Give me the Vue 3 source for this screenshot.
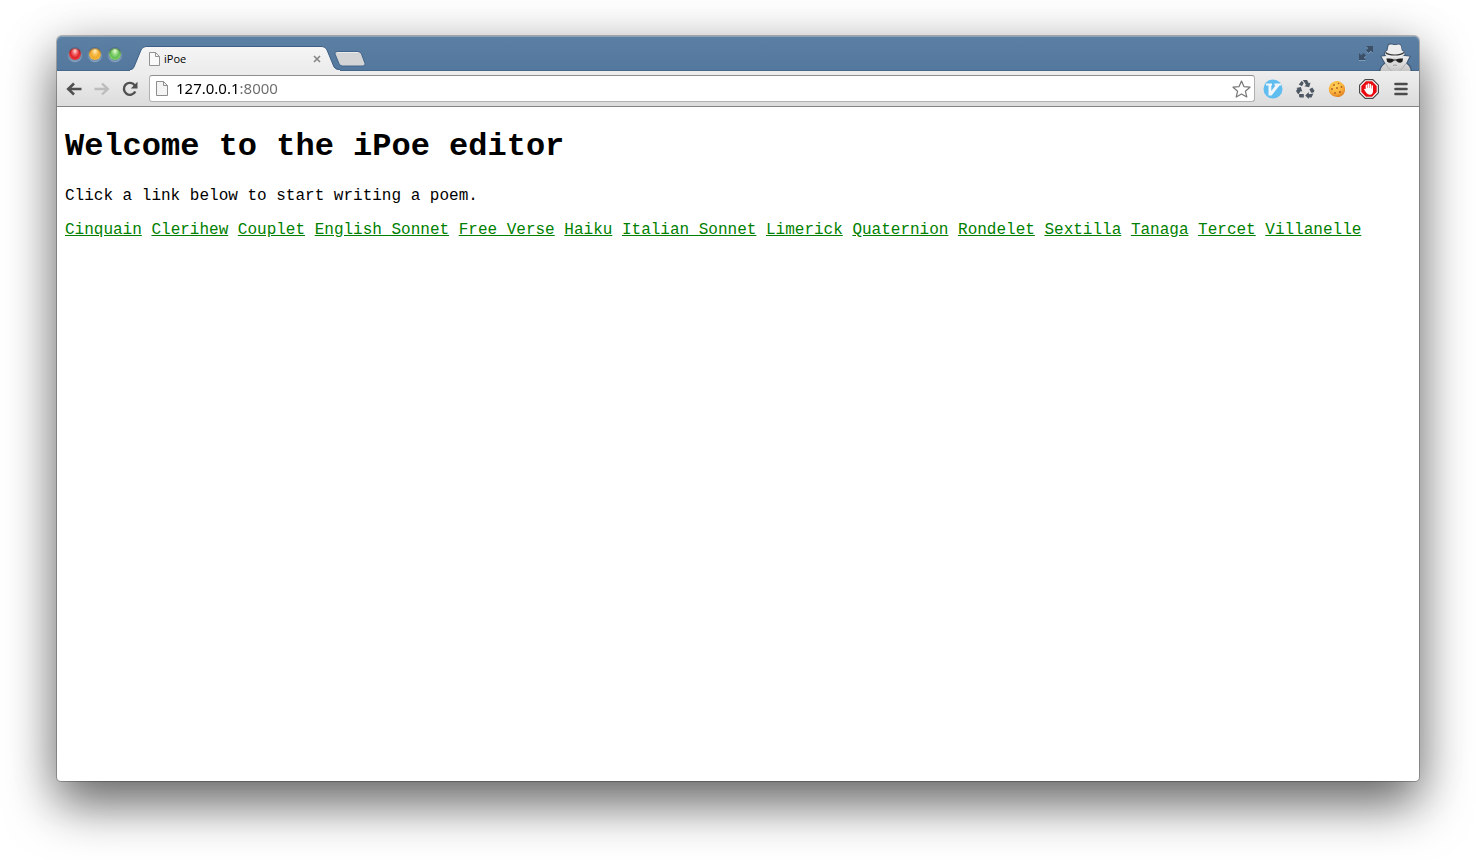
<script setup>
import { ref } from 'vue'

const address = ref('127.0.0.1:8000')
const poems = [
  'Cinquain', 'Clerihew', 'Couplet', 'English Sonnet', 'Free Verse', 'Haiku', 'Italian Sonnet',
  'Limerick', 'Quaternion', 'Rondelet', 'Sextilla', 'Tanaga', 'Tercet', 'Villanelle',
]
const lights = [
  { name: 'Close window', tone: 'red' },
  { name: 'Minimize window', tone: 'amber' },
  { name: 'Zoom window', tone: 'green' },
]
</script>

<template>
  <div class="desktop">
    <div class="window">
      <header class="strip">
        <div class="lights">
          <button v-for="l in lights" :key="l.tone" class="light" :class="l.tone" :aria-label="l.name"></button>
        </div>
        <div class="tab">
          <svg class="tab-shape" width="210" height="25" viewBox="0 0 210 25" aria-hidden="true">
            <defs>
              <linearGradient id="tabFill" x1="0" y1="0" x2="0" y2="1">
                <stop offset="0" stop-color="#f5f5f5" />
                <stop offset="1" stop-color="#ececec" />
              </linearGradient>
            </defs>
            <path d="M0 25V24Q3 24 4 21L11 4Q12.500 .5 16 .5H192Q195.500 .5 197 4L204 21Q205.500 24 210 24V25Z" fill="url(#tabFill)" />
            <path d="M0 23.500Q3 23.500 4 21L11 4Q12.500 .5 16 .5H192Q195.500 .5 197 4L204 21Q205.500 23.500 210 23.500" fill="none" stroke="#3d5f85" />
          </svg>
          <svg class="page-icon" width="11" height="14" viewBox="0 0 11 14" aria-hidden="true">
            <path d="M.5 .5H6.500L10.500 4.500V13.500H.5Z" fill="#fafafa" stroke="#929292" />
            <path d="M6.500 .5V4.500H10.500" fill="none" stroke="#929292" />
          </svg>
          <span class="tab-title">iPoe</span>
          <button class="tab-close" aria-label="Close tab">
            <svg width="8" height="8" viewBox="0 0 8 8"><path d="M1 1L7 7M7 1L1 7" stroke="#858585" stroke-width="1.600" /></svg>
          </button>
        </div>
        <button class="new-tab" aria-label="New tab">
          <svg width="32" height="16" viewBox="0 0 32 16">
            <path d="M3 .5H24Q26.500 .5 27.500 3L31 12.500Q31.500 15 29 15H8.500Q6 15 5 12.500L1 3Q.3 .5 3 .5Z" fill="#d3d4d6" stroke="#42658b" />
            <path d="M3 1.500H24" stroke="#e9eaeb" />
          </svg>
        </button>
        <button class="expand" aria-label="Full screen">
          <svg width="16" height="16" viewBox="0 0 16 16">
            <path d="M8 1H15V8L12.800 5.800L10.500 8L8 5.500L10.200 3.200ZM1 8L3.200 10.200L5.500 8L8 10.500L5.800 12.800L8 15H1Z" fill="#7e9fbe" transform="translate(0 1)" />
            <path d="M8 1H15V8L12.800 5.800L10.500 8L8 5.500L10.200 3.200ZM1 8L3.200 10.200L5.500 8L8 10.500L5.800 12.800L8 15H1Z" fill="#3b5067" />
          </svg>
        </button>
        <svg class="spy" width="34" height="28" viewBox="0 0 34 28" role="img" aria-label="Incognito">
          <defs>
            <linearGradient id="coat" x1="0" y1="0" x2="0" y2="1">
              <stop offset="0" stop-color="#f0f0f0" />
              <stop offset="1" stop-color="#c6c6c6" />
            </linearGradient>
          </defs>
          <path d="M7.500 7L8.500 2Q9.500 -.5 13 .5Q16 1.500 19 .5Q22 0 22.500 3L23.500 7Q27 9 26.500 12L32 13L28.500 20Q32.500 22 33 28H0Q1 23 5 20L1 13L5 12Q4 9 7.500 7Z" fill="#33465b" opacity=".6" />
          <path d="M2.500 13.500L8 13Q16 14.500 25 13L30.500 13.500L27 20.500Q31.500 23 31.500 28H1.500Q2 23 6.500 20.500Z" fill="url(#coat)" />
          <path d="M8.500 7.500L9.500 2.500Q10.500 1 13 1.500Q16 2.500 19 1.500Q21.500 1 22 3.500L22.800 7.500Q26 9 25.500 11.500Q23 15 16 15Q8 15 6 11.500Q5.500 9 8.500 7.500Z" fill="#ededed" />
          <path d="M6.500 9.500Q9 12 16 12Q22 12 25 9.500" fill="none" stroke="#383838" stroke-width="1.200" />
          <path d="M7.500 15Q15 14 24.500 15L23 20L18 24H14L9 20Z" fill="#d8d8d8" />
          <path d="M7.500 15.500Q12 15 15 16.500H17Q20 15 24 15.500L23.500 18.500Q21 21 18 18.500L17 17.500H15L14 18.500Q11 21 8 18.500Z" fill="#202020" />
          <path d="M6.500 20.500Q9 25 12.500 28M27 20.500Q24 25 20.500 28" fill="none" stroke="#b0b0b0" />
          <path d="M14 22.500Q16 21.500 18 22.500" fill="none" stroke="#9a9a9a" />
        </svg>
      </header>

      <nav class="toolbar" aria-label="Browser">
        <button class="nav" aria-label="Back">
          <svg width="16" height="14" viewBox="0 0 16 14"><path d="M8 1.500L2.200 7L8 12.500M2.500 7H15.500" fill="none" stroke="#505050" stroke-width="2.600" /></svg>
        </button>
        <button class="nav" aria-label="Forward">
          <svg width="16" height="14" viewBox="0 0 16 14"><path d="M8 1.500L13.800 7L8 12.500M13.500 7H.5" fill="none" stroke="#bcbcbc" stroke-width="2.400" /></svg>
        </button>
        <button class="nav" aria-label="Reload">
          <svg width="16" height="16" viewBox="0 0 16 16">
            <path d="M12.700 4.200A6 6 0 1 0 13.300 10.500" fill="none" stroke="#505050" stroke-width="2.400" />
            <path d="M15.500 .8V7.500H8.800Z" fill="#505050" />
          </svg>
        </button>
        <div class="omnibox">
          <svg class="page-icon" width="12" height="15" viewBox="0 0 12 15" aria-hidden="true">
            <path d="M.5 .5H7.500L11.500 4.500V14.500H.5Z" fill="#f4f4f4" stroke="#8d8d8d" />
            <path d="M7.500 .5V4.500H11.500" fill="none" stroke="#8d8d8d" />
          </svg>
          <input v-model="address" class="address" type="text" aria-label="Address" spellcheck="false" />
          <button class="star" aria-label="Bookmark this page">
            <svg width="19" height="18" viewBox="0 0 19 18"><path d="M9.500 1L11.900 6.600L18 7.200L13.400 11.200L14.800 17L9.500 13.900L4.200 17L5.600 11.200L1 7.200L7.100 6.600Z" fill="#fff" stroke="#777" stroke-width="1.200" stroke-linejoin="round" /></svg>
          </button>
        </div>
        <div class="extensions">
          <button class="ext" aria-label="Vimium">
            <svg width="20" height="20" viewBox="0 0 20 20">
              <circle cx="10" cy="10" r="9.500" fill="#5fbdf0" />
              <path d="M3 4.500H9V6.500H8.300V12L12.500 6.500H11.500V4.500H18V6.500H16.500L8.600 16.500H5.500V6.500H3Z" fill="#f2f6f8" />
            </svg>
          </button>
          <button class="ext" aria-label="Recycle">
            <svg width="20" height="20" viewBox="0 0 20 20" fill="#4d5864">
              <path d="M7.800 1H12L13.800 4.200L15.500 3.400L14.200 8.300L9.300 7.200L11 6.100L9.400 3.300Z" />
              <path d="M6.800 1.800L8.700 4L7 7.300L3.800 5.500Z" />
              <path d="M1.200 9L5.900 8L7.300 12.700L5.800 11.900L4.400 14L3.300 15.600L1 12L2.500 9.800Z" />
              <path d="M4.200 15H8.800V18.500H5.200Q3.500 18.300 4.200 15Z" />
              <path d="M10.200 16.600L13.800 13V15H15.800L18.400 14.600L16.500 18.400H13.800V20Z" />
              <path d="M14.300 10.200L17.300 8.400L19.300 11.600Q19.500 13.600 17.600 13.700H16.200Z" />
            </svg>
          </button>
          <button class="ext" aria-label="Cookies">
            <svg width="18" height="18" viewBox="0 0 18 18">
              <defs>
                <radialGradient id="cookie" cx=".42" cy=".3" r=".75">
                  <stop offset="0" stop-color="#ffd45a" />
                  <stop offset=".6" stop-color="#f9b03c" />
                  <stop offset="1" stop-color="#de7a1c" />
                </radialGradient>
              </defs>
              <path d="M8.500 1Q11 .5 12.500 2L16 5Q17.500 8 17 11Q16 15 12.500 16.500Q9 17.600 6 16.300Q2 15 1 11Q0 8 2 5Q4 1.500 8.500 1Z" fill="url(#cookie)" />
              <g fill="#ac5c1f">
                <circle cx="6" cy="5" r=".9" /><circle cx="10.500" cy="3.500" r=".8" /><circle cx="4" cy="9" r=".9" />
                <circle cx="9" cy="8" r=".9" /><circle cx="13.500" cy="7" r=".9" /><circle cx="7" cy="13" r=".9" /><circle cx="12" cy="12" r="1.100" />
              </g>
            </svg>
          </button>
          <button class="ext" aria-label="Ad blocker">
            <svg width="20" height="20" viewBox="0 0 20 20">
              <path d="M6.200 .6H13.800L19.400 6.200V13.800L13.800 19.400H6.200L.6 13.800V6.200Z" fill="#fff" stroke="#484848" stroke-width="1.200" />
              <path d="M6.900 2.300H13.100L17.700 6.900V13.100L13.100 17.700H6.900L2.300 13.100V6.900Z" fill="#e80b10" />
              <path d="M6.700 10V6Q7.500 5 8.200 6V9H8.600V4.800Q9.400 3.900 10.200 4.800V9H10.600V5.200Q11.400 4.400 12.100 5.200V9.500H12.500V6.600Q13.300 5.800 14 6.600V12Q14 15.700 10.800 15.700Q8.800 15.700 7.500 13.900L5.200 10.700Q5 9.500 6.700 10Z" fill="#fff" />
            </svg>
          </button>
          <button class="ext" aria-label="Menu">
            <svg width="14" height="14" viewBox="0 0 14 14"><path d="M1.500 2H12.500M1.500 7H12.500M1.500 12H12.500" stroke="#4b4b4b" stroke-width="2.600" stroke-linecap="round" /></svg>
          </button>
        </div>
      </nav>

      <main class="page">
        <h1>Welcome to the iPoe editor</h1>
        <p>Click a link below to start writing a poem.</p>
        <p>
          <template v-for="poem in poems" :key="poem"><a href="#">{{ poem }}</a>{{ ' ' }}</template>
        </p>
      </main>
    </div>
  </div>
</template>

<style>
body {
  margin: 0;
  background: #fff;
}
</style>

<style scoped>
.desktop {
  box-sizing: border-box;
  min-height: 100vh;
  padding: 36px 57px 79px;
  display: flex;
  overflow: hidden;
}
.window {
  flex: 1;
  min-width: 0;
  display: flex;
  flex-direction: column;
  background: #fff;
  border-radius: 5px 5px 4px 4px;
  box-shadow: 0 0 0 1px rgba(0, 0, 0, 0.25), 0 24px 50px rgba(0, 0, 0, 0.55), 0 4px 50px rgba(0, 0, 0, 0.15);
}
button {
  border: 0;
  padding: 0;
  margin: 0;
  background: none;
  display: flex;
  align-items: center;
  justify-content: center;
}
svg {
  display: block;
  flex: none;
}
.strip {
  display: flex;
  align-items: flex-end;
  height: 35px;
  border-radius: 5px 5px 0 0;
  background: linear-gradient(#5c7fa4, #54779d);
  box-shadow: inset 0 1px #8ba3bb, inset 0 -1px #456789;
}
.lights {
  display: flex;
  gap: 8px;
  padding: 0 10px 11px 12px;
}
.light {
  width: 12px;
  height: 12px;
  border-radius: 50%;
  box-shadow: 0 0 0 1px rgba(30, 50, 75, 0.25), 0 1px 1px 1px rgba(190, 210, 230, 0.6), inset 0 1px 1px rgba(0, 0, 0, 0.4);
}
.red {
  background: radial-gradient(ellipse at 50% 25%, #ffe0de 0, #f2696a 28%, #df1f27 55%, #ff8f88 100%);
}
.amber {
  background: radial-gradient(ellipse at 50% 25%, #fff0c8 0, #f9c45c 28%, #f0a726 55%, #ffec85 100%);
}
.green {
  background: radial-gradient(ellipse at 50% 25%, #e8ffdc 0, #9ada84 28%, #62bd52 55%, #c2ffa0 100%);
}
.tab {
  position: relative;
  display: flex;
  align-items: center;
  box-sizing: border-box;
  width: 210px;
  height: 25px;
  margin-left: -1px;
  padding: 0 19px;
}
.tab-shape {
  position: absolute;
  inset: 0;
}
.tab .page-icon,
.tab-title,
.tab-close {
  position: relative;
}
.tab-title {
  flex: 1;
  margin-left: 4px;
  font: 11px/16px "Open Sans", "Noto Sans", sans-serif;
  color: #000;
}
.tab-close {
  width: 8px;
  height: 16px;
}
.new-tab {
  margin: 0 auto 4px -6px;
  position: relative;
}
.expand {
  margin: 0 5px 10px 0;
}
.spy {
  margin-right: 6px;
}
.toolbar {
  display: flex;
  align-items: center;
  height: 36px;
  box-sizing: border-box;
  padding: 0 2px 0 3px;
  border-bottom: 1px solid #838383;
  background: linear-gradient(#eeeeee, #dcdcdc);
}
.nav {
  width: 28px;
  height: 28px;
}
.omnibox {
  flex: 1;
  display: flex;
  align-items: center;
  box-sizing: border-box;
  height: 27px;
  margin: 0 2px 0 5px;
  padding: 0 3px 0 6px;
  border: 1px solid #b0b0b0;
  border-top-color: #8f8f8f;
  border-radius: 3px;
  background: #fff;
}
.address {
  flex: 1;
  min-width: 0;
  height: 24px;
  margin-left: 8px;
  padding: 0 0 2px;
  box-sizing: border-box;
  border: 0;
  outline: 0;
  font: 15px/22px "Noto Sans", "Open Sans", sans-serif;
  color: transparent;
  caret-color: #000;
  background: linear-gradient(to right, #000 64px, #6b6b6b 64px);
  -webkit-background-clip: text;
  background-clip: text;
}
.extensions {
  display: flex;
}
.ext {
  width: 32px;
  height: 28px;
}
.page {
  flex: 1;
  padding: 0 8px;
  font: 16px/18px "Liberation Mono", "Courier New", monospace;
  color: #000;
}
h1 {
  margin: 22px 0;
  font-size: 32px;
  line-height: 36px;
}
p {
  margin: 16px 0;
}
a {
  color: #007f00;
  text-decoration: underline;
}
</style>
